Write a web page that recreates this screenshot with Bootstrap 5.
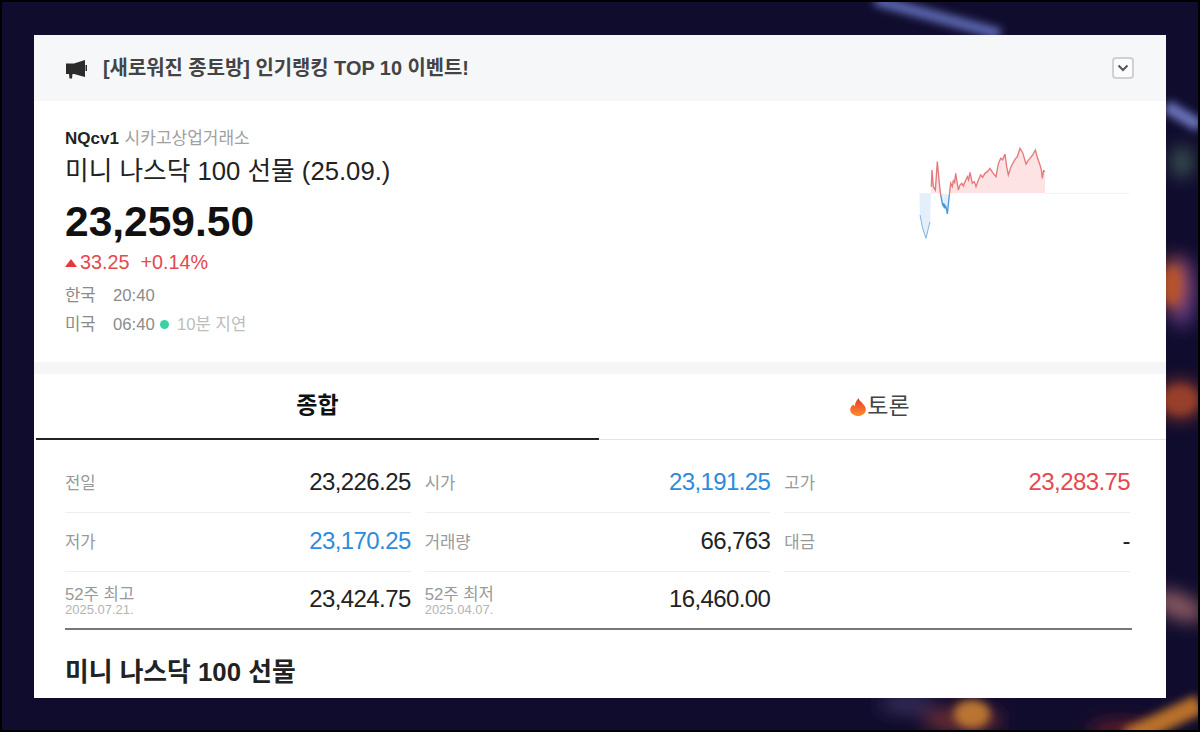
<!DOCTYPE html>
<html lang="ko">
<head>
    <meta charset="UTF-8">
    <meta name="viewport" content="width=device-width, initial-scale=1.0">
    <title>미니 나스닥 100 선물</title>
    <link href="https://cdn.jsdelivr.net/npm/bootstrap@5.3.2/dist/css/bootstrap.min.css" rel="stylesheet">
    <style>
        html, body { height: 732px; overflow: hidden; }
        body {
            background: #000;
            font-family: "Liberation Sans", "Noto Sans CJK KR", sans-serif;
            color: #111;
            padding: 2px;
        }
        .backdrop {
            position: relative;
            height: 728px;
            background: #100c2e;
            overflow: hidden;
            padding: 33px 32px 0;
        }
        .backdrop-art { position: absolute; left: 0; top: 0; }
        .panel {
            position: relative;
            background: #fff;
            height: 663px;
            overflow: hidden;
        }
        .notice {
            height: 66px;
            background: #f6f7f9;
            padding: 2px 32px 0;
            font-size: 19.9px;
            font-weight: 700;
            color: #444;
        }
        .notice-btn {
            width: 22px;
            height: 22px;
            border: 2px solid #cfd1d4;
            border-radius: 4px;
            background: #fbfbfc;
            margin-top: -2px;
        }
        .summary { height: 261px; padding: 27px 32px 0 31px; }
        .sym { font-size: 17px; line-height: 22px; color: #a0a0a0; }
        .sym b { color: #222; margin-right: 1px; }
        .title { font-size: 25.7px; line-height: 30px; margin-top: 6px; color: #222; }
        .price { font-size: 42.5px; font-weight: 700; line-height: 50px; margin-top: 11px; color: #111; }
        .delta { font-size: 19.8px; line-height: 24px; color: #e5484d; margin-top: 3px; }
        .tri {
            display: inline-block;
            width: 0;
            height: 0;
            border-left: 6px solid transparent;
            border-right: 6px solid transparent;
            border-bottom: 8px solid #e5383b;
            margin-right: 3px;
            vertical-align: 2px;
        }
        .times { font-size: 16.7px; line-height: 29px; color: #8b8b8b; margin-top: 7px; }
        .times span.zone { display: inline-block; width: 48px; }
        .dot {
            display: inline-block;
            width: 9px;
            height: 9px;
            border-radius: 50%;
            background: #3ecfa5;
            margin: 0 3px 1px 1px;
        }
        .delay { color: #bdbdbd; }
        .spark { margin-top: 12px; margin-right: 5px; flex: none; filter: blur(.4px); }
        .band { height: 12px; background: #f5f6f8; }
        .tabbar { height: 66px; border-bottom: 1px solid #e3e3e3; margin-left: 2px; }
        .tabbar > div { font-size: 23px; height: 66px; padding-bottom: 2px; color: #444; }
        .tabbar > div.on { font-weight: 700; color: #111; border-bottom: 2px solid #222; width: 563px; }
        .tabbar > div.off { flex: 1; padding-right: 6px; }
        .quotes-wrap { margin: 14px 34px 0 31px; border-bottom: 2px solid #777; }
        .quotes { --bs-gutter-x: 14px; margin-right: -5px; }
        .cell { height: 59px; border-bottom: 1px solid #eeeeee; }
        .cell-last { border-bottom: 0; height: 56px; }
        .lbl { font-size: 16.7px; color: #999; line-height: 18px; padding-top: 2px; }
        .lbl small { display: block; font-size: 13px; line-height: 12px; color: #b4b4b4; }
        .val { font-size: 24px; letter-spacing: -.6px; color: #222; margin-top: -2px; }
        .up { color: #e5484d; }
        .down { color: #2e8bdc; }
        .bottom-title { font-size: 25.8px; font-weight: 700; margin: 25px 0 0 31px; line-height: 34px; color: #222; }
    </style>
</head>
<body>
<div class="backdrop">
    <svg class="backdrop-art" width="1196" height="728" viewBox="0 0 1196 728">
        <defs>
            <filter id="b1" x="-50%" y="-50%" width="200%" height="200%"><feGaussianBlur stdDeviation="4"/></filter>
            <filter id="b2" x="-50%" y="-50%" width="200%" height="200%"><feGaussianBlur stdDeviation="9"/></filter>
        </defs>
        <g filter="url(#b2)">
            <ellipse cx="1180" cy="160" rx="10" ry="16" fill="#3f5a55"/>
            <ellipse cx="1180" cy="290" rx="14" ry="36" fill="#5c3a80"/>
            <ellipse cx="905" cy="702" rx="28" ry="8" fill="#3c3560"/>
            <ellipse cx="960" cy="718" rx="40" ry="12" fill="#6e2f30"/>
            <ellipse cx="1120" cy="728" rx="34" ry="7" fill="#7a2326"/>
            <ellipse cx="1170" cy="282" rx="12" ry="26" fill="#b9562c"/>
            <ellipse cx="1178" cy="398" rx="22" ry="18" fill="#a0412a"/>
            <ellipse cx="1176" cy="604" rx="28" ry="12" fill="#8f5d63" transform="rotate(22 1176 604)"/>
        </g>
        <g filter="url(#b1)">
            <path d="M873 -2 L998 32" stroke="#5f6cb5" stroke-width="11" fill="none"/>
            <path d="M1164 104 L1198 124" stroke="#6c76bd" stroke-width="13" fill="none"/>
            <ellipse cx="1170" cy="284" rx="7" ry="18" fill="#b8532c"/>
            <ellipse cx="1178" cy="398" rx="16" ry="12" fill="#98402a"/>
            <path d="M1125 736 L1198 702" stroke="#b96f2c" stroke-width="20" fill="none"/>
            <ellipse cx="970" cy="712" rx="18" ry="14" fill="#b97430"/>
        </g>
    </svg>

    <div class="panel">
        <!-- 공지 -->
        <div class="notice d-flex align-items-center">
            <svg width="21" height="19" viewBox="0 0 21 19" class="flex-shrink-0 megaphone" fill="#2b2b2b">
                <path d="M0 3.500h8V14H0z"/>
                <path d="M8 3.500 19 0v17L8 14z"/>
                <path d="M3 14h3.500l-.5 4.500H3.500z"/>
                <path d="M19.500 5H21v6h-1.500z"/>
            </svg>
            <span class="ms-3">[새로워진 종토방] 인기랭킹 TOP 10 이벤트!</span>
            <button class="notice-btn ms-auto p-0 d-flex align-items-center justify-content-center" type="button" aria-label="펼치기">
                <svg width="12" height="8" viewBox="0 0 12 8"><path d="M1.500 1.500 6 6l4.500-4.500" fill="none" stroke="#555" stroke-width="2"/></svg>
            </button>
        </div>

        <!-- 시세 요약 -->
        <div class="summary d-flex justify-content-between">
            <div>
                <div class="sym"><b>NQcv1</b> 시카고상업거래소</div>
                <div class="title">미니 나스닥 100 선물 (25.09.)</div>
                <div class="price">23,259.50</div>
                <div class="delta"><span class="tri"></span>33.25 &nbsp;+0.14%</div>
                <div class="times">
                    <div><span class="zone">한국</span>20:40</div>
                    <div><span class="zone">미국</span>06:40 <span class="dot"></span> <span class="delay">10분 지연</span></div>
                </div>
            </div>
            <svg class="spark" width="219" height="105" viewBox="0 0 657 315">
                <path d="M28 160 L30 225 38 265 48 295 55 265 60 245 63 160Z" fill="#e3effa"/>
                <path d="M92 160 L98 195 105 205 112 222 118 165Z" fill="#e3effa"/>
                <path d="M63 160 L64 140 66 90 70 140 76 150 82 65 88 130 92 160Z" fill="#fde3e3"/>
                <path d="M118 160 L122 130 130 122 137 100 145 150 155 130 165 125 172 110 180 97 187 130 198 140 212 105 225 100 240 85 258 110 272 55 285 42 295 105 315 58 330 25 348 72 360 55 376 30 390 75 397 115 405 95 405 160Z" fill="#fde3e3"/>
                <path d="M405 160H657" stroke="#f1f1f1" stroke-width="3"/>
                <path d="M30 225 38 265 48 295 55 265 60 245" fill="none" stroke="#7db4e4" stroke-width="3"/>
                <path d="M92 165 98 195 105 205 100 190 108 200 112 222 118 165" fill="none" stroke="#4b97da" stroke-width="4"/>
                <path d="M64 140 66 90 70 140 76 150 82 65 88 130 92 165" fill="none" stroke="#e5787c" stroke-width="4"/>
                <path d="M118 165 122 130 127 140 130 122 134 128 137 100 141 125 145 150 150 135 155 130 160 138 165 125 172 110 176 120 180 97 187 130 193 125 198 140 205 120 212 105 218 112 225 100 232 95 240 85 248 98 258 110 265 72 272 55 278 60 285 42 290 80 295 105 303 80 315 58 322 50 330 25 338 38 348 72 354 62 360 55 368 45 376 30 383 55 390 75 394 90 397 115 401 92 405 95" fill="none" stroke="#e5787c" stroke-width="4"/>
            </svg>
        </div>

        <div class="band"></div>

        <!-- 탭 -->
        <div class="tabbar d-flex">
            <div class="on d-flex align-items-center justify-content-center">종합</div>
            <div class="off d-flex align-items-center justify-content-center">
                <svg width="18" height="22" viewBox="0 0 18 22">
                    <defs>
                        <linearGradient id="flame" x1="0" y1="0" x2="0" y2="1">
                            <stop offset="0" stop-color="#e8352b"/>
                            <stop offset="1" stop-color="#ff8f2a"/>
                        </linearGradient>
                    </defs>
                    <path d="M9.500 3c.5 2.500 2.500 3.500 4.500 6 2 2.200 3 4 2.800 6C16.500 18.500 13 21 9 21s-7.500-2.500-7.800-6C1 12.500 3 10.500 4.500 9.500c.3.800.6 1.300 1.300 1.800C6 8 7.500 5.500 9.500 3z" fill="url(#flame)"/>
                </svg>
                <span>토론</span>
            </div>
        </div>

        <!-- 시세 표 -->
        <div class="quotes-wrap">
            <div class="row quotes">
                <div class="col-4"><div class="cell d-flex justify-content-between align-items-center"><span class="lbl">전일</span><span class="val">23,226.25</span></div></div>
                <div class="col-4"><div class="cell d-flex justify-content-between align-items-center"><span class="lbl">시가</span><span class="val down">23,191.25</span></div></div>
                <div class="col-4"><div class="cell d-flex justify-content-between align-items-center"><span class="lbl">고가</span><span class="val up">23,283.75</span></div></div>
                <div class="col-4"><div class="cell d-flex justify-content-between align-items-center"><span class="lbl">저가</span><span class="val down">23,170.25</span></div></div>
                <div class="col-4"><div class="cell d-flex justify-content-between align-items-center"><span class="lbl">거래량</span><span class="val">66,763</span></div></div>
                <div class="col-4"><div class="cell d-flex justify-content-between align-items-center"><span class="lbl">대금</span><span class="val">-</span></div></div>
                <div class="col-4"><div class="cell cell-last d-flex justify-content-between align-items-center"><span class="lbl">52주 최고<small>2025.07.21.</small></span><span class="val">23,424.75</span></div></div>
                <div class="col-4"><div class="cell cell-last d-flex justify-content-between align-items-center"><span class="lbl">52주 최저<small>2025.04.07.</small></span><span class="val">16,460.00</span></div></div>
                <div class="col-4"><div class="cell cell-last"></div></div>
            </div>
        </div>

        <div class="bottom-title">미니 나스닥 100 선물</div>
    </div>
</div>
<script src="https://cdn.jsdelivr.net/npm/bootstrap@5.3.2/dist/js/bootstrap.bundle.min.js"></script>
</body>
</html>
